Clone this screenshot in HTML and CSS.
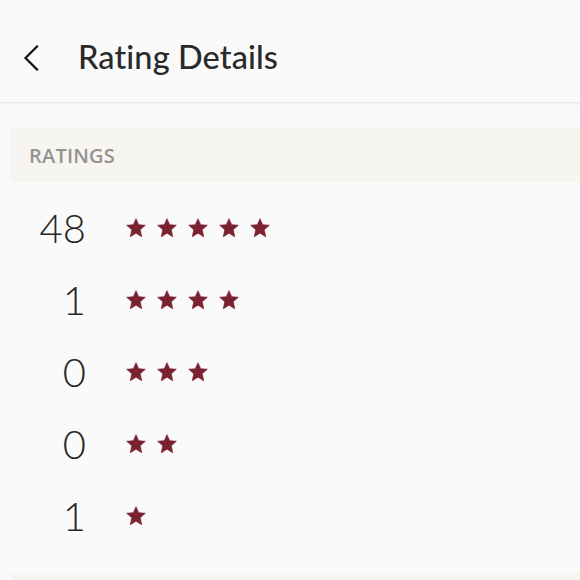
FILE: index.html
```html
<!DOCTYPE html>
<html>
<head>
<meta charset="utf-8">
<link rel="stylesheet" href="styles.css">
</head>
<body>
<header class="topbar">
  <svg class="back" width="16" height="26" viewBox="0 0 16 26"><path d="M14 1.5 L2.5 13 L14 24.5" fill="none" stroke="#111" stroke-width="2.2" stroke-linecap="square"/></svg>
  <h1 class="title">Rating Details</h1>
</header>
<section class="section">
  <div class="band">RATINGS</div>
  <ul class="rows">
    <li class="row"><span class="count">48</span><span class="stars"><svg class="star" viewBox="0 0 24 24"><use href="#s"/></svg><svg class="star" viewBox="0 0 24 24"><use href="#s"/></svg><svg class="star" viewBox="0 0 24 24"><use href="#s"/></svg><svg class="star" viewBox="0 0 24 24"><use href="#s"/></svg><svg class="star" viewBox="0 0 24 24"><use href="#s"/></svg></span></li>
    <li class="row"><span class="count">1</span><span class="stars"><svg class="star" viewBox="0 0 24 24"><use href="#s"/></svg><svg class="star" viewBox="0 0 24 24"><use href="#s"/></svg><svg class="star" viewBox="0 0 24 24"><use href="#s"/></svg><svg class="star" viewBox="0 0 24 24"><use href="#s"/></svg></span></li>
    <li class="row"><span class="count">0</span><span class="stars"><svg class="star" viewBox="0 0 24 24"><use href="#s"/></svg><svg class="star" viewBox="0 0 24 24"><use href="#s"/></svg><svg class="star" viewBox="0 0 24 24"><use href="#s"/></svg></span></li>
    <li class="row"><span class="count">0</span><span class="stars"><svg class="star" viewBox="0 0 24 24"><use href="#s"/></svg><svg class="star" viewBox="0 0 24 24"><use href="#s"/></svg></span></li>
    <li class="row"><span class="count">1</span><span class="stars"><svg class="star" viewBox="0 0 24 24"><use href="#s"/></svg></span></li>
  </ul>
  <div class="band next"></div>
</section>
<svg width="0" height="0" style="position:absolute">
  <defs><path id="s" d="M12 0.8 L15.2 8 L23.2 8.7 L17.1 14 L18.9 22.6 L12 18.2 L5.1 22.6 L6.9 14 L0.8 8.7 L8.8 8 Z" fill="#7b2231" stroke="#7b2231" stroke-width="0.8" stroke-linejoin="round"/></defs>
</svg>
</body>
</html>
```
FILE: styles.css
```css
html, body {
  margin: 0;
  padding: 0;
  background: #fafafa;
  font-family: Lato, "Open Sans", sans-serif;
  overflow: hidden;
}
.topbar {
  height: 103px;
  display: flex;
  align-items: center;
  padding: 11px 0 0 23px;
  box-sizing: border-box;
  border-bottom: 1px solid #e6e6e6;
  box-shadow: 0 1px 2px rgba(0,0,0,0.06);
}
.back {
  display: block;
  margin-top: 2px;
}
.title {
  margin: 0 0 0 39px;
  font-size: 32.5px;
  font-weight: 500;
  color: #2a2a2a;
  letter-spacing: 0.1px;
}
.section {
  padding: 25px 0 0 11px;
}
.band {
  height: 54px;
  background: #f6f5f1;
  display: flex;
  align-items: center;
  padding-left: 18px;
  font-family: "Open Sans", sans-serif;
  font-size: 20px;
  font-weight: 600;
  color: #979290;
  letter-spacing: 0.2px;
}
.rows {
  list-style: none;
  margin: 0;
  padding: 10px 0 0 0;
}
.row {
  height: 72px;
  display: flex;
  align-items: center;
}
.count {
  width: 75px;
  text-align: right;
  font-size: 40px;
  font-weight: 300;
  color: #262626;
  line-height: 1;
}
.stars {
  display: flex;
  gap: 11px;
  margin-left: 40px;
}
.star {
  width: 20px;
  height: 20px;
  display: block;
}
.next {
  height: 20px;
  margin-top: 21px;
}
```
